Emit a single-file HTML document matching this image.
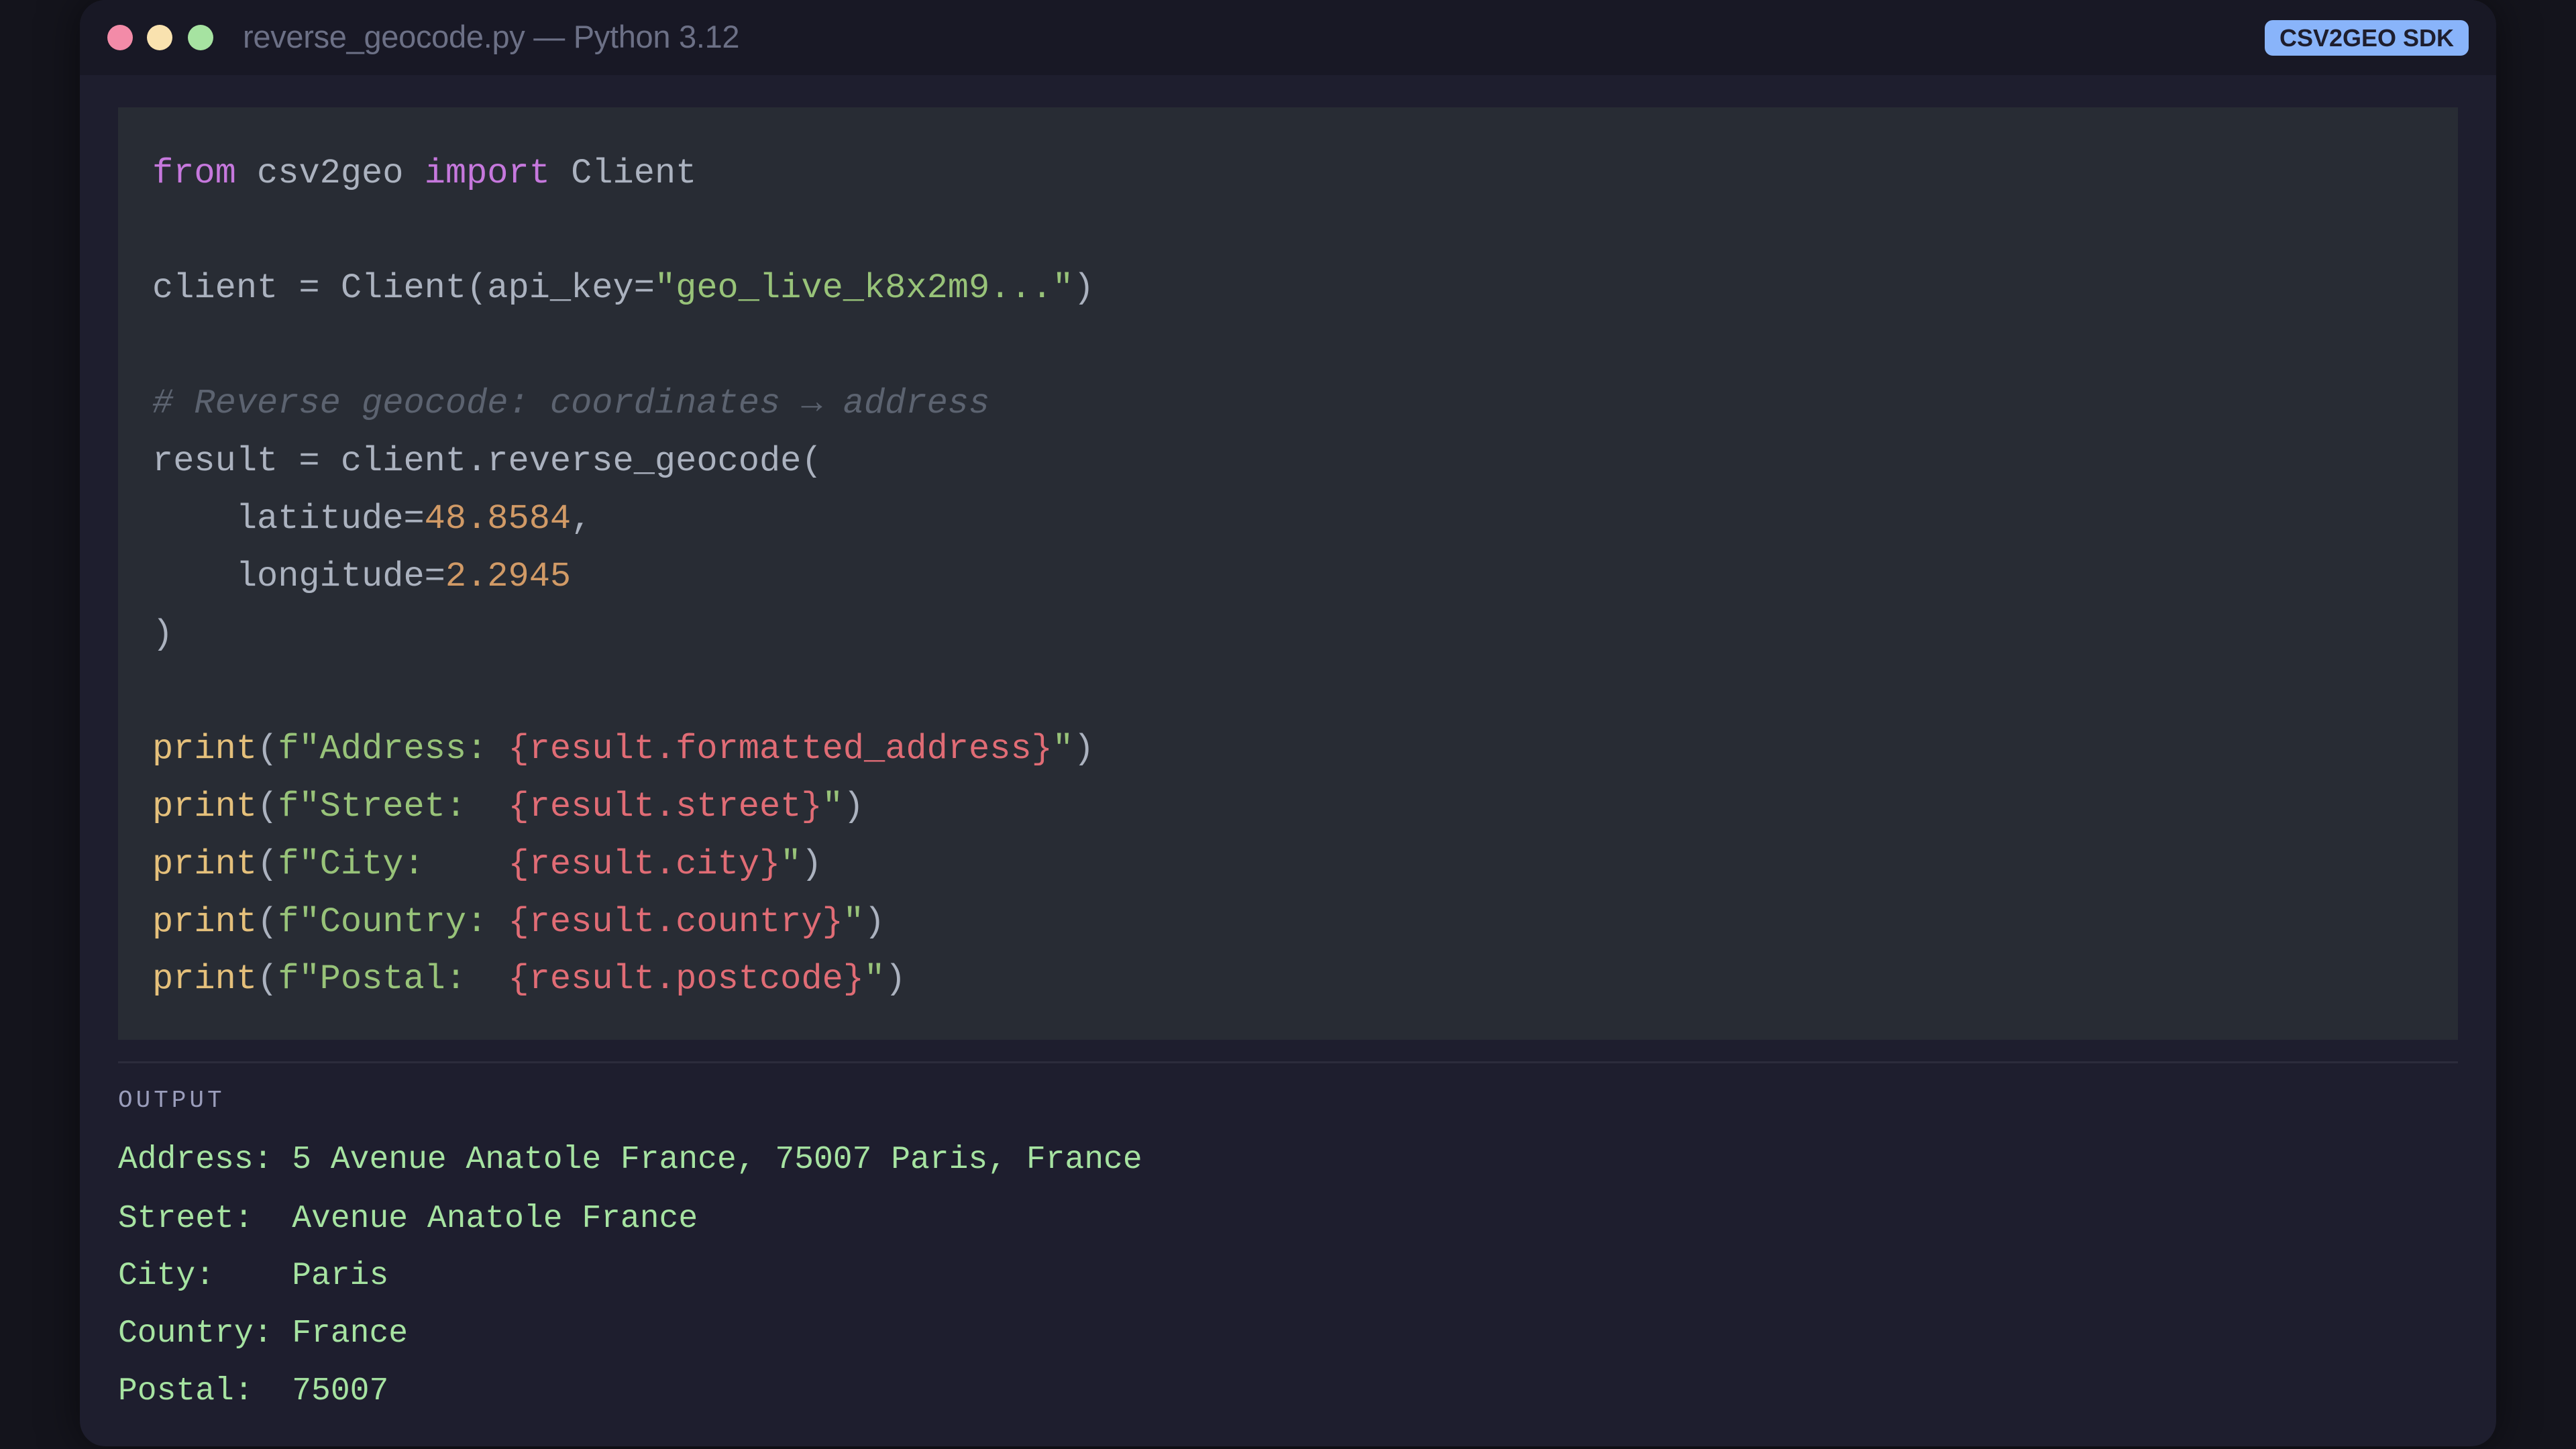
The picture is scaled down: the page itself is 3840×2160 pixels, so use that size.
<!DOCTYPE html>
<html><head><meta charset="utf-8"><style>
*{margin:0;padding:0;box-sizing:border-box}
html,body{width:3840px;height:2160px;background:#14141c;overflow:hidden}
.win{position:absolute;left:119px;top:0;width:3602px;height:2156px;background:#1e1e2e;border-radius:38px;overflow:hidden;box-shadow:0 0 60px rgba(0,0,0,.5)}
.hdr{position:absolute;left:0;top:0;width:100%;height:112px;background:#181825}
.dot{position:absolute;top:37px;width:38px;height:38px;border-radius:50%}
.title{position:absolute;left:243px;top:26px;font:47px "Liberation Sans",sans-serif;color:#6c7086;line-height:58px;letter-spacing:-0.3px}
.badge{position:absolute;left:3257px;top:30px;width:304px;height:53px;background:#89b4fa;border-radius:12px;color:#1e1e2e;font:bold 36px "Liberation Sans",sans-serif;text-align:center;line-height:53px}
.code{position:absolute;left:57px;top:160px;width:3488px;height:1390px;background:#282c34}
.l{position:absolute;left:51px;font:52px "Liberation Mono",monospace;white-space:pre;color:#abb2bf;line-height:60px;top:0}
.k{color:#c678dd}.s{color:#98c379}.n{color:#d19a66}.p{color:#e5c07b}.b{color:#e06c75}.c{color:#5c6370;font-style:italic}
.sep{position:absolute;left:57px;top:1582px;width:3488px;height:3px;background:#2c2c3c}
.olab{position:absolute;left:57px;top:1620px;font:36px "Liberation Mono",monospace;letter-spacing:5px;color:#9a9dbb;line-height:42px}
.o{position:absolute;left:57px;font:48px "Liberation Mono",monospace;white-space:pre;color:#a6e3a1;line-height:60px}
</style></head><body>
<div class="win">
<div class="hdr"></div>
<div class="dot" style="left:41px;background:#f38ba8"></div>
<div class="dot" style="left:100px;background:#f9e2af"></div>
<div class="dot" style="left:161px;background:#a6e3a1"></div>
<div class="title">reverse_geocode.py — Python 3.12</div>
<div class="badge">CSV2GEO SDK</div>
<div class="code">
<div class="l" style="top:69px"><span class="k">from</span> csv2geo <span class="k">import</span> Client</div>
<div class="l" style="top:240px">client = Client(api_key=<span class="s">"geo_live_k8x2m9..."</span>)</div>
<div class="l" style="top:412px"><span class="c"># Reverse geocode: coordinates → address</span></div>
<div class="l" style="top:498px">result = client.reverse_geocode(</div>
<div class="l" style="top:584px">    latitude=<span class="n">48.8584</span>,</div>
<div class="l" style="top:670px">    longitude=<span class="n">2.2945</span></div>
<div class="l" style="top:756px">)</div>
<div class="l" style="top:927px"><span class="p">print</span>(<span class="s">f"Address: </span><span class="b">{result.formatted_address}</span><span class="s">"</span>)</div>
<div class="l" style="top:1013px"><span class="p">print</span>(<span class="s">f"Street:  </span><span class="b">{result.street}</span><span class="s">"</span>)</div>
<div class="l" style="top:1099px"><span class="p">print</span>(<span class="s">f"City:    </span><span class="b">{result.city}</span><span class="s">"</span>)</div>
<div class="l" style="top:1185px"><span class="p">print</span>(<span class="s">f"Country: </span><span class="b">{result.country}</span><span class="s">"</span>)</div>
<div class="l" style="top:1270px"><span class="p">print</span>(<span class="s">f"Postal:  </span><span class="b">{result.postcode}</span><span class="s">"</span>)</div>
</div>
<div class="sep"></div>
<div class="olab">OUTPUT</div>
<div class="o" style="top:1699px">Address: 5 Avenue Anatole France, 75007 Paris, France</div>
<div class="o" style="top:1787px">Street:  Avenue Anatole France</div>
<div class="o" style="top:1872px">City:    Paris</div>
<div class="o" style="top:1958px">Country: France</div>
<div class="o" style="top:2044px">Postal:  75007</div>
</div>
</body></html>
